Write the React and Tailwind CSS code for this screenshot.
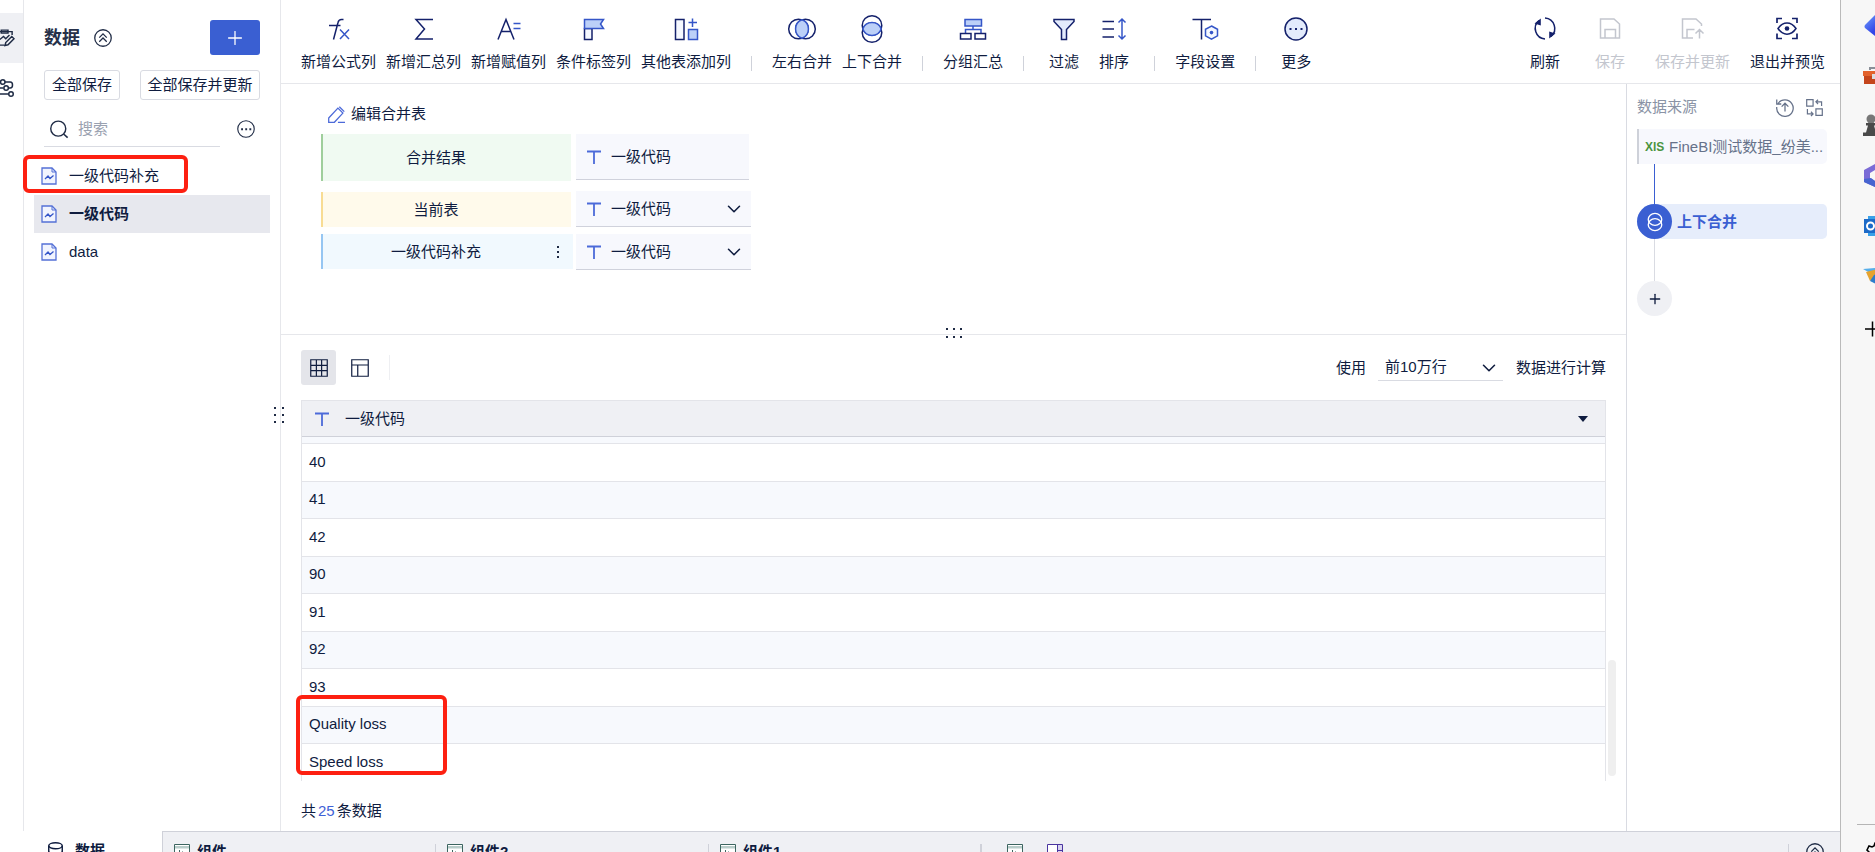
import { ChevronDown, Plus } from "lucide-react";

const NAVY = "#14216b";
const BLUE = "#3556c8";

const Icon = ({ size = 24, children, className = "" }) => (
  <svg
    width={size}
    height={size}
    viewBox="0 0 24 24"
    fill="none"
    stroke="currentColor"
    strokeWidth="1.5"
    className={`block shrink-0 overflow-visible ${className}`}
    aria-hidden="true"
  >
    {children}
  </svg>
);

/* ---------- toolbar icons ---------- */

const FormulaIcon = () => (
  <Icon>
    <path d="M16.5 2.5h-2c-2 0-3 .9-3.5 3L6.5 22.500M2 8.500h11.500" stroke={NAVY} />
    <path d="M13 12.500l9 9.500M22 12.500l-9 9.500" stroke={BLUE} />
  </Icon>
);

const SumIcon = () => (
  <Icon>
    <path d="M21 2.500H4L12.500 12 4 22h17" stroke={NAVY} />
  </Icon>
);

const AssignIcon = () => (
  <Icon>
    <path d="M1 22.500l8-20 8 20M4 14.500h10" stroke={NAVY} />
    <path d="M16.500 6.500h7M16.500 11.500h7" stroke={BLUE} />
  </Icon>
);

const FlagIcon = () => (
  <Icon>
    <path d="M2.500 11.500h7.500v11H2.500z" fill="#f5f8ff" stroke={NAVY} />
    <path d="M2.500 2.500h19l-3 4.500 3 4.500h-19z" fill="#bcd0f8" stroke={BLUE} />
  </Icon>
);

const AddColumnIcon = () => (
  <Icon>
    <path d="M1.500 2.500h8.500v20h-8.500z" fill="#f5f8ff" stroke={NAVY} />
    <path d="M18.500 1.500v8.500M14.500 5.500h8.500" stroke={BLUE} />
    <path d="M14.500 12.500h9v10h-9z" fill="#bcd0f8" stroke={BLUE} />
  </Icon>
);

const MergeSideIcon = () => (
  <Icon>
    <circle cx="8.500" cy="12" r="9.800" stroke={NAVY} />
    <circle cx="15.500" cy="12" r="9.800" stroke={NAVY} />
    <path d="M12 2.800a9.800 9.800 0 0 1 0 18.400a9.800 9.800 0 0 1 0-18.400z" fill="#bcd0f8" stroke={BLUE} />
  </Icon>
);

const MergeStackIcon = () => (
  <Icon>
    <circle cx="12" cy="8.500" r="9.800" stroke={NAVY} />
    <circle cx="12" cy="15.500" r="9.800" stroke={NAVY} />
    <path d="M2.800 12a9.800 9.800 0 0 1 18.400 0a9.800 9.800 0 0 1-18.400 0z" fill="#bcd0f8" stroke={BLUE} />
  </Icon>
);

const GroupIcon = () => (
  <Icon>
    <path d="M4 2.500h16.500v6.500H4z" fill="#bcd0f8" stroke={BLUE} />
    <path d="M12 9v3.500M4.500 16v-3.500h15.500v3.500" stroke={BLUE} />
    <path d="M-.5 16.500h10.500v5.500H-.5zM14 16.500h10.500v5.500H14z" fill="#fff" stroke={NAVY} />
  </Icon>
);

const FilterIcon = () => (
  <Icon>
    <path d="M2 2.500h20v2l-7.500 8v10h-5v-10L2 4.500z" fill="#e3ebfc" stroke={NAVY} />
  </Icon>
);

const SortIcon = () => (
  <Icon>
    <path d="M.5 4.500h11.500M.5 12h11.500M.5 20h11.500" stroke={NAVY} />
    <path d="M20 2v20M16.500 5.500L20 2l3.500 3.500M16.500 18.500L20 22l3.500-3.500" stroke={BLUE} />
  </Icon>
);

const FieldIcon = () => (
  <Icon>
    <path d="M-.5 2.500h18.500M8.500 2.500v20" stroke={NAVY} />
    <path d="M18.500 9l6 3.300v6.600l-6 3.300-6-3.300v-6.600z" fill="#f5f8ff" stroke={BLUE} />
    <circle cx="18.500" cy="15.600" r="1.800" fill={BLUE} stroke="none" />
  </Icon>
);

const MoreIcon = () => (
  <Icon>
    <circle cx="12" cy="12" r="11" fill="#e3ebfc" stroke={NAVY} />
    <path d="M5.500 11h2v2h-2zM11 11h2v2h-2zM16.500 11h2v2h-2z" fill={NAVY} stroke="none" />
  </Icon>
);

const RefreshIcon = () => (
  <Icon>
    <path d="M12 1a10.500 10.500 0 0 1 6 18.500M12 22A10.500 10.500 0 0 1 6 3.500" stroke={NAVY} />
    <path d="M7.800 1.500v7L1.500 6.500zM16.200 21.500v-7l6.300 2z" fill={NAVY} stroke="none" />
  </Icon>
);

const SaveIcon = () => (
  <Icon>
    <path d="M2.500 2h13.500l5.500 5v14h-19zM7 21v-8.500h10.500v8.500" />
  </Icon>
);

const SaveUpdateIcon = () => (
  <Icon>
    <path d="M13 21H2.500V2H16l5.500 5v2M7 21v-8.500h7.500M19.500 21.500V13M15.500 16.500l4-4 4 4" />
  </Icon>
);

const PreviewIcon = () => (
  <Icon>
    <path d="M2 6V1.500h5M17 1.500h5V6M22 16.500v5h-5M7 21.500H2v-5" stroke={NAVY} strokeWidth="1.700" />
    <path d="M3 11.500c5-7.500 13-7.500 18 0-5 7.500-13 7.500-18 0z" stroke={NAVY} />
    <circle cx="12" cy="11.500" r="2.300" fill={NAVY} stroke="none" />
  </Icon>
);

/* ---------- small icons ---------- */

const SheetIcon = () => (
  <svg width="16" height="18" viewBox="0 0 16 18" fill="none" className="block shrink-0" aria-hidden="true">
    <path d="M1 1h10l4 4v12H1z" fill="#f1f4fe" stroke="#5470d6" strokeWidth="1.300" />
    <path d="M11 1v4h4" stroke="#5470d6" />
    <path d="M4 12l3-3 2 2.500 3.500-3" stroke={BLUE} strokeWidth="1.300" />
  </svg>
);

const TextTypeIcon = () => (
  <svg width="14" height="14" viewBox="0 0 14 14" className="block shrink-0" aria-hidden="true">
    <path d="M0 1.500h14M7 1.500V14" stroke="#4c6ad9" strokeWidth="1.800" />
  </svg>
);

const ChartIcon = () => (
  <svg width="16" height="16" viewBox="0 0 16 16" fill="none" className="block shrink-0" aria-hidden="true">
    <path d="M.5.5h15v15H.5z" fill="#fff" stroke="#3c6560" />
    <path d="M1 2h14v2.500H1z" fill="#b9cdca" />
    <path d="M5.500 6v8M8.500 7.500V14M11 9v5" stroke="#3c6560" />
  </svg>
);

const DashboardIcon = () => (
  <svg width="16" height="16" viewBox="0 0 16 16" fill="none" className="block shrink-0" aria-hidden="true">
    <path d="M.5.5h15v15H.5z" fill="#fff" stroke="#4a35a0" />
    <path d="M11 1h4v14h-4z" fill="#d9d4f0" />
    <path d="M10.500 1v14M11 6.500h4" stroke="#4a35a0" />
  </svg>
);

const DoubleUpIcon = () => (
  <Icon size={18} className="text-[#1f2b45]">
    <circle cx="12" cy="12" r="11" strokeWidth="1.700" />
    <path d="M7 11.500l5-5 5 5M7 17l5-5 5 5" strokeWidth="1.700" />
  </Icon>
);

const EllipsisIcon = () => (
  <Icon size={18} className="text-[#1f2b45]">
    <circle cx="12" cy="12" r="11" strokeWidth="1.500" />
    <path d="M5.500 11h2.500v2.500H5.500zM11 11h2.500v2.500H11zM16.500 11H19v2.500h-2.500z" fill="currentColor" stroke="none" />
  </Icon>
);

const Dots = ({ cols, rows, dx, dy }) => {
  const points = [];
  for (let r = 0; r < rows; r++) for (let c = 0; c < cols; c++) points.push([c, r]);
  const w = (cols - 1) * dx + 2;
  const h = (rows - 1) * dy + 2;
  return (
    <svg width={w} height={h} viewBox={`0 0 ${w} ${h}`} className="block" aria-hidden="true">
      {points.map(([c, r]) => (
        <rect key={`${c}-${r}`} x={c * dx} y={r * dy} width="2" height="2" fill="#1f2b45" />
      ))}
    </svg>
  );
};

/* ---------- toolbar ---------- */

const tools = [
  [
    ["新增公式列", FormulaIcon],
    ["新增汇总列", SumIcon],
    ["新增赋值列", AssignIcon],
    ["条件标签列", FlagIcon],
    ["其他表添加列", AddColumnIcon],
  ],
  [
    ["左右合并", MergeSideIcon],
    ["上下合并", MergeStackIcon],
  ],
  [["分组汇总", GroupIcon]],
  [
    ["过滤", FilterIcon],
    ["排序", SortIcon],
  ],
  [["字段设置", FieldIcon]],
  [["更多", MoreIcon]],
];

const ToolButton = ({ label, icon: Glyph, disabled }) => (
  <button
    type="button"
    disabled={disabled}
    className="flex min-w-10 flex-col items-center gap-2.5 whitespace-nowrap disabled:text-[#c3c6ce]"
  >
    <Glyph />
    <span className="leading-[22px]">{label}</span>
  </button>
);

const Toolbar = () => (
  <header className="flex h-[84px] shrink-0 items-start justify-between border-b border-[#e6e7eb] pt-[17px] pr-[15px] pl-5">
    <div className="flex items-end gap-5">
      {tools.map((group, i) => (
        <div key={i} className="flex items-end gap-5">
          {i > 0 && <span className="mb-0.5 h-[15px] w-px bg-[#cfd2da]" />}
          <div className="flex gap-2.5">
            {group.map(([label, icon]) => (
              <ToolButton key={label} label={label} icon={icon} />
            ))}
          </div>
        </div>
      ))}
    </div>
    <div className="flex gap-5">
      <div className="flex gap-[25px]">
        <ToolButton label="刷新" icon={RefreshIcon} />
        <ToolButton label="保存" icon={SaveIcon} disabled />
        <ToolButton label="保存并更新" icon={SaveUpdateIcon} disabled />
      </div>
      <ToolButton label="退出并预览" icon={PreviewIcon} />
    </div>
  </header>
);

/* ---------- left side ---------- */

const Rail = () => (
  <nav className="flex w-6 shrink-0 flex-col overflow-hidden border-r border-[#e6e7eb] pt-[13px]">
    <button type="button" aria-label="编辑" className="flex h-[50px] items-center justify-end bg-[#eff0f4] pr-[9px]">
      <Icon size={18} className="text-[#1f2b45]">
        <path
          d="M21.500 8V3.500H2v18h9M7 1.500h9v4H7zM5 14l5-4 3 3 5-5M12 22l1-4 8-8 3 3-8 8z"
          strokeWidth="1.900"
        />
      </Icon>
    </button>
    <button type="button" aria-label="设置" className="flex h-[50px] items-center justify-end pr-[9px]">
      <Icon size={18} className="text-[#1f2b45]">
        <path d="M0 4h6M12 4h7a3 4 0 0 1 0 8h-2M0 12h10M0 20h17" strokeWidth="2" />
        <circle cx="9" cy="4" r="3" strokeWidth="2" />
        <circle cx="13.500" cy="12" r="3" strokeWidth="2" />
        <circle cx="20" cy="20" r="3" strokeWidth="2" />
      </Icon>
    </button>
  </nav>
);

const sheets = ["一级代码补充", "一级代码", "data"];

const Sidebar = () => (
  <aside className="w-[257px] shrink-0 border-r border-[#e6e7eb]">
    <div className="px-5 pt-5">
      <div className="flex h-[35px] items-center">
        <h1 className="text-lg font-bold text-[#26314a]">数据</h1>
        <button type="button" aria-label="收起" className="ml-3.5">
          <DoubleUpIcon />
        </button>
        <button
          type="button"
          aria-label="新增"
          className="ml-auto flex h-[35px] w-[50px] items-center justify-center rounded-[3px] bg-[#3a5fd2] text-white"
        >
          <Plus size={22} strokeWidth={1.4} />
        </button>
      </div>
      <div className="mt-[15px] flex justify-between">
        <button type="button" className="h-[30px] w-[76px] rounded-[3px] border border-[#d9dbe2]">
          全部保存
        </button>
        <button type="button" className="h-[30px] w-[120px] rounded-[3px] border border-[#d9dbe2]">
          全部保存并更新
        </button>
      </div>
      <div className="mt-[11px] flex items-center justify-between pr-[5px]">
        <label className="flex h-9 w-44 items-center gap-2.5 border-b border-[#d9dbe2] pl-1.5">
          <Icon size={18} className="text-[#1f2b45]">
            <circle cx="11" cy="11.500" r="10" strokeWidth="1.900" />
            <path d="M18.500 19l5 4.500" strokeWidth="2.200" />
          </Icon>
          <input
            type="text"
            placeholder="搜索"
            aria-label="搜索"
            className="w-full outline-none placeholder:text-[#9aa1b0]"
          />
        </label>
        <button type="button" aria-label="更多操作">
          <EllipsisIcon />
        </button>
      </div>
    </div>
    <ul className="relative mt-2.5 px-2.5">
      {sheets.map((name) => (
        <li key={name}>
          <a
            href="#"
            className={`flex h-[38px] items-center gap-3 pl-[7px] ${
              name === "一级代码" ? "bg-[#e7e8ee] font-bold" : ""
            }`}
          >
            <SheetIcon />
            {name}
          </a>
        </li>
      ))}
      <span className="pointer-events-none absolute -top-0.5 -left-px h-[38px] w-[165px] rounded-md border-4 border-[#fd2011]" />
    </ul>
  </aside>
);

/* ---------- merge editor ---------- */

const FieldCell = ({ className, dropdown }) => {
  const body = (
    <>
      <TextTypeIcon />
      <span className="ml-2.5">一级代码</span>
      {dropdown && <ChevronDown size={22} strokeWidth={1.7} className="ml-auto" />}
    </>
  );
  const base = `flex items-center border-b border-[#d0d2dc] bg-[#f7f8fd] pl-[11px] pr-1.5 ${className}`;
  return dropdown ? (
    <button type="button" className={base}>
      {body}
    </button>
  ) : (
    <div className={base}>{body}</div>
  );
};

const MergeEditor = () => (
  <section className="relative h-[251px] shrink-0 border-b border-[#e6e7eb] pt-[18px] pl-10">
    <button type="button" className="ml-[7px] flex h-6 items-center gap-1.5">
      <Icon size={17} className="text-[#4c6ad9]">
        <path d="M1 17L14 3l7 7-12 13H1zM16 1l7 7M14 23h10" strokeWidth="1.800" />
      </Icon>
      编辑合并表
    </button>
    <div className="mt-2 flex gap-[5px]">
      <div className="flex h-[47px] w-[250px] items-center justify-center border-l-2 border-[#9fce9c] bg-[#f0faf2] pr-[22px]">
        合并结果
      </div>
      <FieldCell className="h-[46px] w-[173px]" />
    </div>
    <div className="mt-2.5 flex items-end gap-[5px]">
      <div className="flex h-[35px] w-[250px] items-center justify-center border-l-2 border-[#f8dc93] bg-[#fffaeb] pr-[22px]">
        当前表
      </div>
      <FieldCell dropdown className="h-9 w-[175px]" />
    </div>
    <div className="mt-[7px] flex gap-[3px]">
      <div className="relative flex h-[35px] w-[252px] items-center justify-center border-l-2 border-[#96c6f2] bg-[#f1f9fe] pr-6">
        一级代码补充
        <button type="button" aria-label="更多" className="absolute right-3.5 flex flex-col gap-[3px]">
          <span className="size-0.5 bg-[#1f2b45]" />
          <span className="size-0.5 bg-[#1f2b45]" />
          <span className="size-0.5 bg-[#1f2b45]" />
        </button>
      </div>
      <FieldCell dropdown className="h-9 w-[175px]" />
    </div>
    <div className="absolute -bottom-1 left-1/2 -translate-x-1/2">
      <Dots cols={3} rows={2} dx={7} dy={8} />
    </div>
  </section>
);

/* ---------- data preview ---------- */

const rows = ["40", "41", "42", "90", "91", "92", "93", "Quality loss", "Speed loss"];

const DataPreview = () => (
  <section className="flex min-h-0 flex-1 flex-col px-5 pt-[15px]">
    <div className="flex h-[35px] shrink-0 items-center">
      <button type="button" aria-label="表格" className="flex size-[35px] items-center justify-center rounded-[3px] bg-[#e4e5ea]">
        <Icon size={18}>
          <path d="M1 1h22v22H1zM1 8.500h22M1 15.500h22M8.500 1v22M15.500 1v22" strokeWidth="1.600" />
        </Icon>
      </button>
      <button type="button" aria-label="布局" className="ml-[15px]">
        <Icon size={18}>
          <path d="M1 1h22v22H1zM1 8h22M9 8v15" strokeWidth="1.600" />
        </Icon>
      </button>
      <span className="ml-5 h-[25px] w-px bg-[#eeeff2]" />
      <label className="ml-auto flex items-center">
        使用
        <span className="relative ml-3 flex items-center">
          <select className="h-[27px] w-[125px] appearance-none border-b border-[#d9dbe2] pl-[7px] outline-none">
            <option>前10万行</option>
          </select>
          <ChevronDown size={22} strokeWidth={1.7} className="pointer-events-none absolute right-[3px]" />
        </span>
      </label>
      <span className="ml-[13px]">数据进行计算</span>
    </div>

    <div className="relative mt-[15px] h-[381px] shrink-0">
      <div className="h-full overflow-hidden border-x border-[#e3e4e9]">
        <table className="w-full border-collapse text-left">
          <thead>
            <tr className="h-9 border-t border-b border-t-[#e3e4e9] border-b-[#cfd1d9] bg-[#eff0f4]">
              <th className="p-0 font-normal">
                <div className="flex items-center pr-[17px] pl-[13px]">
                  <TextTypeIcon />
                  <span className="ml-4">一级代码</span>
                  <button type="button" aria-label="排序" className="ml-auto">
                    <svg width="10" height="6" viewBox="0 0 10 6" className="block" aria-hidden="true">
                      <path d="M0 0h10L5 6z" fill="#0f1c3f" />
                    </svg>
                  </button>
                </div>
              </th>
            </tr>
          </thead>
          <tbody>
            <tr className="h-[7px] border-b border-[#e3e4e9] bg-[#f7f9fd]">
              <td className="p-0" />
            </tr>
            {rows.map((value, i) => (
              <tr
                key={value}
                className={`border-b border-[#e3e4e9] ${i % 2 ? "h-[37px] bg-[#f7f9fd]" : "h-[38px]"}`}
              >
                <td className="pt-0 pr-0 pb-0.5 pl-[7px]">{value}</td>
              </tr>
            ))}
          </tbody>
        </table>
      </div>
      <span className="absolute right-[-10px] bottom-[5px] h-[116px] w-2 rounded-full bg-[#efefef]" />
      <span className="pointer-events-none absolute bottom-[6px] -left-[5px] h-[80px] w-[151px] rounded-md border-4 border-[#fd2011]" />
    </div>

    <p className="mt-[19px] flex gap-0.5 leading-[22px]">
      共<span className="text-[#3f61d6]">25</span>条数据
    </p>
  </section>
);

/* ---------- data source panel ---------- */

const SourcePanel = () => (
  <aside className="w-[214px] shrink-0 border-l border-[#d9dbe2] pt-3 pr-[13px] pl-2.5">
    <div className="flex h-[22px] items-center text-[#8a93a5]">
      <h2>数据来源</h2>
      <button type="button" aria-label="历史" className="ml-auto text-[#66728a]">
        <Icon size={18}>
          <path d="M3 7a11 11 0 1 1-2 5M1 2v6h6M12 18V7M7.500 11.500L12 7l4.500 4.500" strokeWidth="1.700" />
        </Icon>
      </button>
      <button type="button" aria-label="切换" className="mr-1 ml-3 text-[#66728a]">
        <Icon size={17}>
          <path
            d="M1 1h9v9H1zM14 14h9v9h-9zM14 4h8v6M17 1l-3 3 3 3M10 21H2v-7M7 18l3 3-3 3"
            strokeWidth="1.700"
          />
        </Icon>
      </button>
    </div>
    <a
      href="#"
      className="mt-[11px] flex h-[35px] items-center gap-[5px] rounded-r-[5px] border-l-2 border-[#ced1d9] bg-[#f7f8fd] pl-1.5 whitespace-nowrap text-[#66728a]"
    >
      <span className="w-[19px] text-xs font-bold text-[#4a9440]">XlS</span>
      FineBI测试数据_纷美...
    </a>
    <div className="ml-[17px] h-10 w-px bg-[#3a5fd2]" />
    <button
      type="button"
      className="flex h-[35px] w-full items-center rounded-l-[18px] rounded-r-[5px] bg-[#e6edfb] font-bold text-[#3a5fd2]"
    >
      <span className="mr-[5px] flex size-[35px] items-center justify-center rounded-full bg-[#3a5fd2] text-white">
        <Icon size={18}>
          <ellipse cx="12" cy="8.500" rx="9" ry="8" strokeWidth="1.800" />
          <ellipse cx="12" cy="15.500" rx="9" ry="8" strokeWidth="1.800" />
        </Icon>
      </span>
      上下合并
    </button>
    <div className="ml-[17px] h-[42px] w-px bg-[#d9dbe2]" />
    <button type="button" aria-label="添加步骤" className="flex size-[35px] items-center justify-center rounded-full bg-[#eff0f4]">
      <Plus size={16} strokeWidth={2} />
    </button>
  </aside>
);

/* ---------- bottom tabs ---------- */

const tabs = ["组件", "组件2", "组件1"];

const BottomTabs = () => (
  <footer className="flex h-[21px] shrink-0 items-start overflow-hidden font-bold">
    <a href="#" className="flex h-10 w-[162px] shrink-0 items-center gap-[11px] pl-12">
      <Icon size={18} className="-mr-0.5">
        <ellipse cx="10" cy="5" rx="9" ry="4" strokeWidth="1.900" />
        <path d="M1 5v14c0 5 18 5 18 0V5M1 12c0 5 18 5 18 0" strokeWidth="1.900" />
      </Icon>
      数据
    </a>
    <div className="flex h-10 flex-1 items-center border-t border-l border-[#cfd1d9] bg-[#eff0f4]">
      {tabs.map((name, i) => (
        <a
          key={name}
          href="#"
          className={`flex h-4 w-[273px] items-center gap-[7px] pl-[11px] ${
            i === 2 ? "border-r-2 border-[#cfd1d9]" : "border-r border-[#cfd1d9]"
          }`}
        >
          <ChartIcon />
          {name}
        </a>
      ))}
      <button type="button" aria-label="新增组件" className="ml-[25px]">
        <ChartIcon />
      </button>
      <button type="button" aria-label="新增仪表板" className="ml-6">
        <DashboardIcon />
      </button>
      <button type="button" aria-label="展开" className="mr-4 ml-auto flex h-4 items-center border-l border-[#cfd1d9] pl-[17px]">
        <DoubleUpIcon />
      </button>
    </div>
  </footer>
);

/* ---------- browser side strip ---------- */

const BrowserStrip = () => (
  <aside className="flex w-[35px] shrink-0 flex-col overflow-hidden border-l border-[#bababa] bg-[#f7f7f7] pt-3.5 pl-[22px]">
    <div className="flex flex-col gap-[26px]">
      <Icon>
        <defs>
          <linearGradient id="gem" x1="0" y1="0" x2="1" y2="1">
            <stop offset="0" stopColor="#6fa0fb" />
            <stop offset="0.6" stopColor="#3445e8" />
          </linearGradient>
        </defs>
        <path d="M2 11L12 1l11 11-11 10-10-8q-1-1.500 0-3z" fill="url(#gem)" stroke="none" />
      </Icon>
      <Icon>
        <path d="M7 6V4h10v2" stroke="#8a8f98" strokeWidth="2" />
        <path d="M0 7h24v5H0z" fill="#e2622d" stroke="none" />
        <path d="M1 12h22v8H1z" fill="#c4451c" stroke="none" />
        <path d="M9 10h6v5H9z" fill="#d9dce0" stroke="none" />
      </Icon>
      <Icon>
        <circle cx="8" cy="5" r="4.500" fill="#777" stroke="none" />
        <path d="M3 9h10v2.500h-2l2 7h2V22H0v-3.500h3l2-7H3z" fill="#4a4a4a" stroke="none" />
      </Icon>
      <Icon>
        <path d="M12 0L1 6v12l11 5v-6l-5-3V9l5-3z" fill="#7b6bd6" stroke="none" />
        <path d="M1 15v3l11 5v-6l-4-3z" fill="#4764d0" stroke="none" />
        <path d="M12 1h11v21H12v-5l5-3V9l-5-3z" fill="#2f7ad8" stroke="none" />
      </Icon>
      <Icon>
        <path d="M5 2h18v20H5z" fill="#39a0e8" stroke="none" />
        <path d="M1 5h15v14H1z" fill="#1c6ac8" stroke="none" />
        <circle cx="7.500" cy="12" r="3.500" stroke="#fff" strokeWidth="2" />
      </Icon>
      <Icon>
        <path d="M0 5l24-2L7 9z" fill="#55aeea" stroke="none" />
        <path d="M3 8l21-5L7 17z" fill="#e6a32e" stroke="none" />
        <path d="M7 17l4-6 13-8-9 18z" fill="#2c7dcc" stroke="none" />
      </Icon>
      <Icon className="text-black">
        <path d="M2 15h18M9.500 7.500v15" />
      </Icon>
    </div>
    <div className="mt-auto -ml-1.5 h-[28px] shrink-0 border-t border-[#b5b5b5] pt-[17px] pl-2">
      <Icon className="text-black">
        <path
          d="M10 1h4l1 3 2 1 3-1 2 4-2 2v3l2 2-2 4-3-1-2 1-1 3h-4l-1-3-2-1-3 1-2-4 2-2v-3L2 8l2-4 3 1 2-1z"
          strokeWidth="1.600"
        />
      </Icon>
    </div>
  </aside>
);

export default function App() {
  return (
    <div className="flex h-screen overflow-hidden bg-white font-['Liberation_Sans','Noto_Sans_CJK_SC',sans-serif] text-[15px] leading-[22px] text-[#0f1c3f]">
      <div className="flex min-w-0 flex-1 flex-col">
        <div className="flex min-h-0 flex-1">
          <Rail />
          <Sidebar />
          <div className="relative flex min-w-0 flex-1 flex-col">
            <Toolbar />
            <div className="flex min-h-0 flex-1">
              <main className="flex min-w-0 flex-1 flex-col">
                <MergeEditor />
                <DataPreview />
              </main>
              <SourcePanel />
            </div>
            <div className="absolute top-[407px] -left-[7px]">
              <Dots cols={2} rows={3} dx={8} dy={7} />
            </div>
          </div>
        </div>
        <BottomTabs />
      </div>
      <BrowserStrip />
    </div>
  );
}
